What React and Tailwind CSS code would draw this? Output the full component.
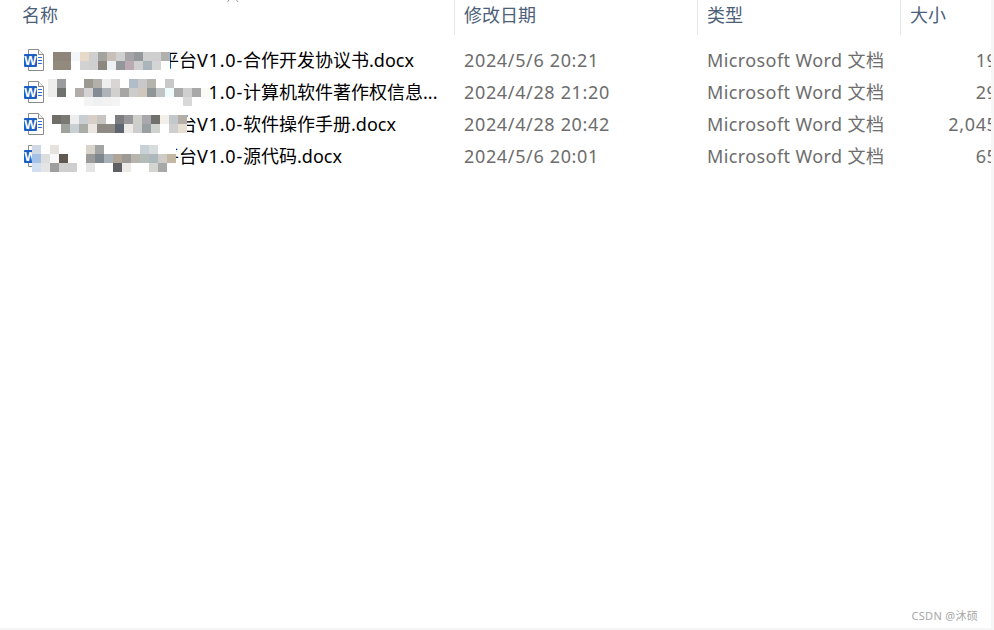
const files = [
  {
    title: "合作开发协议书.docx",
    date: "2024/5/6 20:21",
    size: "19 KB",
    mosaic: (
      <Mosaic
        className="left-[53px] top-[8px]"
        rows={[
          ["#8f857a", "#8f857a", "#f3f6fa", "#e8d9c8", "#cfcfcf", "#a3a3a0", "#c8bfb8", "#d0d0d0", "#a5a5a8", "#94989b", "#cfcfcf", "#cfcfcf", "#b0b0ae"],
          ["#938a7e", "#938a7e", "#ffffff", "#d2d2d2", "#cfcfcf", "#8c8780", "#eef1f4", "#93979a", "#baaab2", "#d0d0d0", "#aab4bb", "#d4d4d4", "#ffffff"],
        ]}
      />
    ),
  },
  {
    title: "计算机软件著作权信息...",
    date: "2024/4/28 21:20",
    size: "29 KB",
    mosaic: (
      <Mosaic
        className="left-[48px] top-[3px]"
        rows={[
          ["#eeeeec", "#9a9c9e", "#ffffff", "#ffffff", "#9b9791", "#b3b0ab", "#eeeeee", "#d9d5d2", "#ffffff", "#b0bdc8", "#c8c8c8", "#b5b3ad", "#ffffff", "#c8c8c8", "#ffffff", "#ffffff", "#ffffff", "#ffffff"],
          ["#eeeeec", "#6f716c", "#ffffff", "#b3adaa", "#d4d2d2", "#838c94", "#aeb5ba", "#d2d0ce", "#a8a6a4", "#cccccc", "#d0c8bc", "#8f9698", "#c0c4c4", "#eefbfd", "#abaaaa", "#cfcfcf", "#a8a8a8", "#fbfbf6"],
          ["#ffffff", "#ffffff", "#ffffff", "#ffffff", "#f4f4f4", "#eef0f2", "#f2f2f2", "#f4f4f4", "#ffffff", "#ffffff", "#ffffff", "#ffffff", "#ffffff", "#ffffff", "#ffffff", "#d8d8d8", "#ffffff", "#ffffff"],
        ]}
      />
    ),
  },
  {
    title: "软件操作手册.docx",
    date: "2024/4/28 20:42",
    size: "2,045 KB",
    mosaic: (
      <Mosaic
        className="left-[52px] top-[7px]"
        rows={[
          ["#6f6d68", "#7b7974", "#eeeeee", "#c9ced2", "#d8d0c8", "#c8c4c0", "#ffffff", "#7d7d7f", "#98989c", "#cfcfc9", "#a9a8ae", "#70706c", "#f5efea", "#c2c8cc", "#b5aea6"],
          ["#ffffff", "#a0a29e", "#c8d0d4", "#aaaca8", "#ebe6e2", "#8f8a84", "#8e8b82", "#5d6670", "#ecebe8", "#cdcdcd", "#98a0a4", "#d0d2ce", "#ffffff", "#cfcfcf", "#e8dfd4"],
        ]}
      />
    ),
  },
  {
    title: "源代码.docx",
    date: "2024/5/6 20:01",
    size: "65 KB",
    mosaic: (
      <Mosaic
        className="left-[32px] top-[5px]"
        rows={[
          ["#cfd8e4", "#ffffff", "#e5e2df", "#ffffff", "#ffffff", "#ffffff", "#d8d4cc", "#a3a5a5", "#ffffff", "#ffffff", "#ffffff", "#ffffff", "#c8d0d8", "#d8dcdc", "#ffffff", "#ffffff"],
          ["#a5c1e6", "#dedede", "#f8f8f8", "#5e5850", "#ffffff", "#ffffff", "#9b9b9b", "#7e868e", "#a8b0b8", "#b0a498", "#9d9a96", "#b8b4ae", "#b4bcb8", "#adb8bc", "#cfccc8", "#c4b8a4"],
          ["#d0dff2", "#e4e4e4", "#9e9e9e", "#cfcfcf", "#cfcfcf", "#ffffff", "#e4e4e4", "#ffffff", "#ffffff", "#5e6064", "#eeeae6", "#ffffff", "#ffffff", "#d4d4d0", "#a8a8a8", "#ffffff"],
        ]}
      />
    ),
  },
];

// pixelated patch that hides the start of a file name
function Mosaic({ rows, className }) {
  return (
    <div className={`absolute flex flex-col blur-[0.5px] ${className}`}>
      {rows.map((row, i) => (
        <div key={i} className="flex">
          {row.map((color, j) => (
            <span key={j} className="h-[9px] w-[9px]" style={{ backgroundColor: color }} />
          ))}
        </div>
      ))}
    </div>
  );
}

function WordIcon() {
  return (
    <svg width="21" height="24" viewBox="0 0 21 24" className="shrink-0">
      <path d="M4.5 1.5H14.5L19.5 6.5V22.5H4.5Z" fill="#fff" stroke="#8a8a8a" />
      <path d="M14.5 1.5V6.5H19.5" fill="#f4f4f4" stroke="#8a8a8a" />
      <path d="M14 9.5H18M14 12.5H18M14 15.5H18" stroke="#2f6fd0" />
      <rect x="0" y="6" width="13" height="13" rx="1" fill="#1c5fc4" />
      <text x="6.5" y="17.2" textAnchor="middle" fill="#fff" fontSize="13" fontWeight="700" fontFamily="'Liberation Sans', sans-serif">
        W
      </text>
    </svg>
  );
}

function HeaderCell({ children, className }) {
  return <div className={`h-[35px] shrink-0 pl-[9px] pt-[2px] border-l border-[#e5e5e5] text-[#4c607a] ${className}`}>{children}</div>;
}

export default function App() {
  return (
    <div className="h-[630px] w-[994px] overflow-hidden bg-[#f6f6f6] text-[18px] font-['Noto_Sans','Noto_Sans_CJK_SC',sans-serif]">
      <div className="relative flex h-[628px] w-[991px] flex-col overflow-hidden bg-white">
        <svg width="12" height="3" viewBox="0 0 12 3" className="absolute left-[227px] top-0">
          <path d="M2 0L0.5 2M9.5 0L11 2" stroke="#9a9a9a" fill="none" />
        </svg>

        <div className="flex">
          <div className="h-[35px] w-[454px] shrink-0 pl-[22px] pt-[2px] text-[#4c607a]">名称</div>
          <HeaderCell className="w-[243px]">修改日期</HeaderCell>
          <HeaderCell className="w-[203px]">类型</HeaderCell>
          <HeaderCell className="w-[91px]">大小</HeaderCell>
        </div>

        <div className="mt-[9px] flex-1">
          {files.map((file) => (
            <div key={file.date} className="relative flex h-8 items-center leading-8">
              <div className="flex w-[454px] shrink-0 items-center pl-[24px]">
                <WordIcon />
                <span className="ml-[116px] whitespace-nowrap text-black">
                  平台<span className="tracking-[0.8px]">V1.0-</span>
                  {file.title}
                </span>
              </div>
              <div className="w-[243px] shrink-0 pl-[10px] tracking-[0.65px] text-[#6d6d6d]">{file.date}</div>
              <div className="w-[203px] shrink-0 pl-[10px] tracking-[0.4px] text-[#6d6d6d]">Microsoft Word 文档</div>
              <div className="w-[91px] shrink-0 whitespace-nowrap tracking-[0.65px] text-[#6d6d6d]">
                <div className="ml-[-20px] w-[147px] text-right">{file.size}</div>
              </div>
              {file.mosaic}
            </div>
          ))}
        </div>

        <div className="flex justify-end pb-[4px] pr-[13px] text-[11px] tracking-[0.3px] text-[#a8a8a8]">CSDN @沐硕</div>
      </div>
    </div>
  );
}
